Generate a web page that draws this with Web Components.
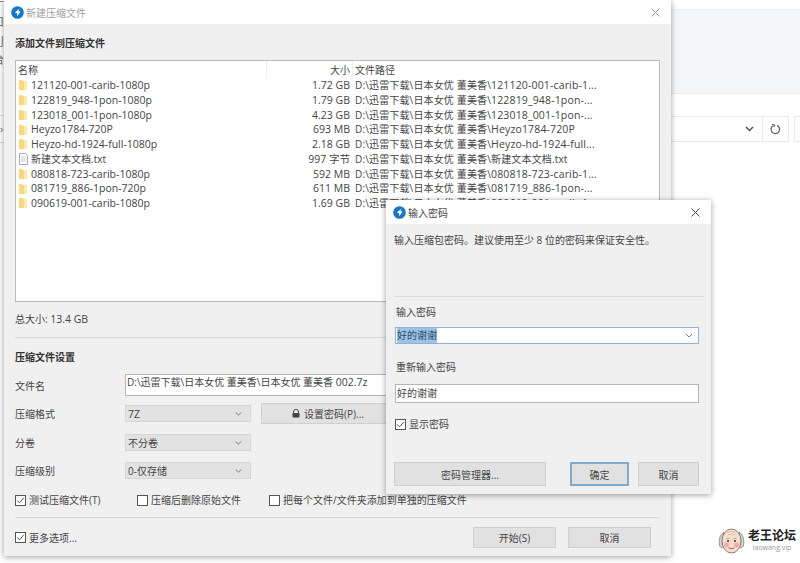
<!DOCTYPE html>
<html lang="zh">
<head>
<meta charset="utf-8">
<title>新建压缩文件</title>
<style>
  html, body { margin: 0; height: 100%; background: #fff; }
  body { font: 10px "Open Sans", "Noto Sans CJK SC", sans-serif; color: #333; overflow: hidden; }
</style>
</head>
<body>
<zip-desktop></zip-desktop>

<script>
const APP_ICON = `<svg width="13" height="13" viewBox="0 0 14 14"><circle cx="7" cy="7" r="6.8" fill="#1477c9"/><path d="M9.300 2.800 4 7.200l2.500.4.200 3.400 3.600-5-2.400-.3z" fill="#fff"/></svg>`;
const PATH_BASE = 'D:\\迅雷下载\\日本女优 董美香\\';

class WinButton extends HTMLElement {
  constructor() {
    super();
    this.attachShadow({ mode: 'open' });
    this.shadowRoot.innerHTML = `
      <style>
        :host {
          display: flex;
          align-items: center;
          justify-content: center;
          gap: 4px;
          box-sizing: border-box;
          height: 21px;
          background: #e1e1e1;
          border: 1px solid #d0d0d0;
          color: #444;
          white-space: nowrap;
        }
        :host([primary]) { border: 2px solid #7cabd2; }
      </style>
      <slot></slot>
    `;
  }
}
customElements.define('win-button', WinButton);

class WinInput extends HTMLElement {
  constructor() {
    super();
    this.attachShadow({ mode: 'open' });
    this.shadowRoot.innerHTML = `
      <style>
        :host {
          display: flex;
          align-items: center;
          box-sizing: border-box;
          height: 19px;
          padding: 0 1px;
          background: #fff;
          border: 1px solid #b5b5b5;
          color: #444;
          white-space: nowrap;
        }
        :host([focused]) { border-color: #8db3d6; }
        :host([focused]) span { background: #9cc3e8; color: #2d4a63; }
        :host([top]) { align-items: flex-start; }
        span { line-height: 15px; }
        svg { margin-left: auto; margin-right: 4px; }
      </style>
      <span><slot></slot></span>
      ${this.hasAttribute('arrow') ? '<svg width="8" height="5" viewBox="0 0 8 5"><path d="M1 1l3 3 3-3" fill="none" stroke="#777"/></svg>' : ''}
    `;
  }
}
customElements.define('win-input', WinInput);

class WinSelect extends HTMLElement {
  constructor() {
    super();
    this.attachShadow({ mode: 'open' });
    this.shadowRoot.innerHTML = `
      <style>
        :host {
          display: flex;
          align-items: center;
          box-sizing: border-box;
          width: 126px;
          height: 17px;
          padding: 0 2px;
          background: #e2e2e2;
          border: 1px solid #d6d6d6;
          color: #444;
        }
        svg { margin-left: auto; margin-right: 6px; }
      </style>
      <slot></slot>
      <svg width="7" height="4" viewBox="0 0 7 4"><path d="M.7.5l2.800 2.600L6.300.5" fill="none" stroke="#777"/></svg>
    `;
  }
}
customElements.define('win-select', WinSelect);

class WinCheck extends HTMLElement {
  constructor() {
    super();
    this.attachShadow({ mode: 'open' });
    this.shadowRoot.innerHTML = `
      <style>
        :host {
          display: inline-flex;
          align-items: center;
          gap: 3px;
          line-height: 16px;
          color: #444;
          white-space: nowrap;
        }
        .box {
          box-sizing: border-box;
          width: 11px;
          height: 11px;
          border: 1px solid #555;
          background: #fff;
          display: flex;
        }
      </style>
      <span class="box">${this.hasAttribute('checked') ? '<svg width="9" height="9" viewBox="0 0 9 9"><path d="M1.200 4.400l2.300 2.400 4.400-5" fill="none" stroke="#555"/></svg>' : ''}</span>
      <slot></slot>
    `;
  }
}
customElements.define('win-check', WinCheck);

class WinWindow extends HTMLElement {
  constructor() {
    super();
    this.attachShadow({ mode: 'open' });
    const faded = this.hasAttribute('inactive');
    this.shadowRoot.innerHTML = `
      <style>
        :host {
          display: flex;
          flex-direction: column;
          position: absolute;
          box-sizing: border-box;
          background: #f0f0f0;
          box-shadow: 0 1px 6px rgba(0,0,0,0.38);
        }
        header {
          flex: none;
          display: flex;
          align-items: center;
          gap: 2px;
          height: 24px;
          padding: 0 7px;
          background: #fff;
          color: ${faded ? '#a2a2a2' : '#444'};
        }
        svg.close { margin-left: auto; margin-right: 4px; }
        main { flex: 1; min-height: 0; display: flex; flex-direction: column; }
      </style>
      <header>
        ${APP_ICON}
        <span>${this.getAttribute('caption')}</span>
        <svg class="close" width="9" height="9" viewBox="0 0 9 9"><path d="M.5.5l8 8M8.500.5l-8 8" stroke="${faded ? '#999' : '#444'}" fill="none"/></svg>
      </header>
      <main><slot></slot></main>
    `;
  }
}
customElements.define('win-window', WinWindow);

class FileList extends HTMLElement {
  constructor() {
    super();
    this.attachShadow({ mode: 'open' });
    const files = [
      ['121120-001-carib-1080p', '1.72 GB', '121120-001-carib-1...'],
      ['122819_948-1pon-1080p', '1.79 GB', '122819_948-1pon-...'],
      ['123018_001-1pon-1080p', '4.23 GB', '123018_001-1pon-...'],
      ['Heyzo1784-720P', '693 MB', 'Heyzo1784-720P'],
      ['Heyzo-hd-1924-full-1080p', '2.18 GB', 'Heyzo-hd-1924-full...'],
      ['新建文本文档.txt', '997 字节', '新建文本文档.txt', true],
      ['080818-723-carib-1080p', '592 MB', '080818-723-carib-1...'],
      ['081719_886-1pon-720p', '611 MB', '081719_886-1pon-...'],
      ['090619-001-carib-1080p', '1.69 GB', '090619-001-carib-1...'],
    ];
    const folder = `<svg width="8" height="10" viewBox="0 0 8 10"><path d="M0 0h3l1 1h4v9H0z" fill="#f8d877"/><path d="M5 1h3v9H5z" fill="#fce9ae"/></svg>`;
    const doc = `<svg width="9" height="12" viewBox="0 0 9 12"><path d="M.5.500h6l2 2v9h-8z" fill="#fbfbfb" stroke="#a9a9a9"/><path d="M2 4h5M2 6h5M2 8h5" stroke="#d0d0d0"/></svg>`;
    this.shadowRoot.innerHTML = `
      <style>
        :host {
          display: block;
          box-sizing: border-box;
          height: 242px;
          background: #fff;
          border: 1px solid #b9b9b9;
          color: #444;
        }
        .row {
          display: grid;
          grid-template-columns: 13px 236px 83px 1fr;
          height: 14.75px;
          line-height: 14.75px;
          padding-left: 2px;
          white-space: nowrap;
        }
        .head { height: 17px; line-height: 18px; }
        .head .name { grid-column: 1 / 3; border-right: 1px solid #eee; }
        .head .path { background: linear-gradient(#eee, #eee) 2px 0 / 1px 100% no-repeat; }
        .icon { display: flex; align-items: center; padding-left: 1px; }
        .size { text-align: right; }
        .path { padding-left: 5px; overflow: hidden; }
        .row:not(.head) .path { letter-spacing: .15px; }
        .lat { font-size: 10.5px; }
      </style>
      <div class="row head"><span class="name">名称</span><span class="size">大小</span><span class="path">文件路径</span></div>
      ${files.map(f => `
        <div class="row">
          <span class="icon">${f[3] ? doc : folder}</span>
          <span class="${f[3] ? '' : 'lat'}">${f[0]}</span>
          <span class="size lat">${f[1]}</span>
          <span class="path">${PATH_BASE}<span class="${f[3] ? '' : 'lat'}">${f[2]}</span></span>
        </div>`).join('')}
    `;
  }
}
customElements.define('file-list', FileList);

class CompressPanel extends HTMLElement {
  constructor() {
    super();
    this.attachShadow({ mode: 'open' });
    this.shadowRoot.innerHTML = `
      <style>
        :host {
          display: flex;
          flex-direction: column;
          flex: 1;
          min-height: 0;
          padding: 11px 11px 0 11px;
          color: #444;
        }
        h2 { margin: 0; font-size: 10px; font-weight: 700; color: #333; line-height: 16px; }
        file-list { margin-top: 9px; }
        .total { margin-top: 9px; line-height: 16px; }
        hr { border: 0; border-top: 1px solid #d9d9d9; margin: 0; }
        .total + hr { margin-top: 10px; }
        .settings { margin-top: 11px; }
        .line {
          display: grid;
          grid-template-columns: 110px 126px 10px 134px;
          align-items: center;
        }
        .name-line { margin-top: 9px; height: 22px; }
        .name-line win-input { grid-column: 2 / 5; width: 300px; height: 22px; }
        .format-line { margin-top: 7px; height: 21px; }
        .split-line { margin-top: 10px; height: 17px; }
        .level-line { margin-top: 11px; height: 17px; }
        .checks { display: flex; margin-top: 13px; }
        .checks win-check:nth-child(1) { width: 122px; }
        .checks win-check:nth-child(2) { width: 132px; }
        .checks + hr { margin-top: 9px; }
        footer { display: flex; align-items: center; margin-top: 9px; padding-right: 9px; }
        footer win-button { width: 83px; }
        footer win-button:nth-of-type(1) { margin-left: auto; margin-right: 12px; }
        .lat { font-size: 10.5px; }
      </style>
      <h2>添加文件到压缩文件</h2>
      <file-list></file-list>
      <div class="total">总大小: <span class="lat">13.4 GB</span></div>
      <hr>
      <h2 class="settings">压缩文件设置</h2>
      <div class="line name-line">
        <span>文件名</span>
        <win-input top>D:\\迅雷下载\\日本女优 董美香\\日本女优 董美香 <span class="lat">002.7z</span></win-input>
      </div>
      <div class="line format-line">
        <span>压缩格式</span>
        <win-select><span class="lat">7Z</span></win-select>
        <span></span>
        <win-button>
          <svg width="8" height="9" viewBox="0 0 8 9"><path d="M1.500 4.500V3a2.500 2.500 0 0 1 5 0v1.500" fill="#eee" stroke="#444"/><rect x=".5" y="4" width="7" height="4.500" rx=".8" fill="#444"/></svg>
          设置密码(P)...
        </win-button>
      </div>
      <div class="line split-line">
        <span>分卷</span>
        <win-select>不分卷</win-select>
      </div>
      <div class="line level-line">
        <span>压缩级别</span>
        <win-select>0-仅存储</win-select>
      </div>
      <div class="checks">
        <win-check checked>测试压缩文件(T)</win-check>
        <win-check>压缩后删除原始文件</win-check>
        <win-check>把每个文件/文件夹添加到单独的压缩文件</win-check>
      </div>
      <hr>
      <footer>
        <win-check checked>更多选项...</win-check>
        <win-button>开始(S)</win-button>
        <win-button>取消</win-button>
      </footer>
    `;
  }
}
customElements.define('compress-panel', CompressPanel);

class PasswordPanel extends HTMLElement {
  constructor() {
    super();
    this.attachShadow({ mode: 'open' });
    this.shadowRoot.innerHTML = `
      <style>
        :host {
          display: flex;
          flex-direction: column;
          flex: 1;
          padding: 8px 12px 0 8px;
          color: #444;
        }
        p { margin: 0; line-height: 16px; }
        hr { border: 0; border-top: 1px solid #d9d9d9; margin: 48px -5px 0 0; }
        label { display: block; margin: 0 0 0 2px; line-height: 16px; }
        .first { margin-top: 7px; }
        win-input { margin: 9px 0 0 1px; }
        win-input[focused] { margin-top: 7px; height: 17px; }
        .second { margin-top: 15px; }
        win-check { margin: 13px 0 0 1px; }
        footer { display: flex; margin-top: 30px; }
        footer win-button { height: 24px; }
        footer win-button:nth-child(1) { width: 152px; margin-right: 24px; }
        footer win-button:nth-child(2) { width: 59px; margin-right: 9px; }
        footer win-button:nth-child(3) { width: 61px; }
      </style>
      <p>输入压缩包密码。建议使用至少 8 位的密码来保证安全性。</p>
      <hr>
      <label class="first">输入密码</label>
      <win-input focused arrow>好的谢谢</win-input>
      <label class="second">重新输入密码</label>
      <win-input>好的谢谢</win-input>
      <win-check checked>显示密码</win-check>
      <footer>
        <win-button>密码管理器...</win-button>
        <win-button primary>确定</win-button>
        <win-button>取消</win-button>
      </footer>
    `;
  }
}
customElements.define('password-panel', PasswordPanel);

class ForumMark extends HTMLElement {
  constructor() {
    super();
    this.attachShadow({ mode: 'open' });
    this.shadowRoot.innerHTML = `
      <style>
        :host {
          position: absolute;
          left: 718px;
          top: 527px;
          display: flex;
          align-items: center;
          gap: 3px;
        }
        .words { display: flex; flex-direction: column; align-items: center; margin-top: -1px; }
        b { font-size: 12px; line-height: 15px; color: #222; }
        small { font-size: 7px; line-height: 9px; color: #999; }
      </style>
      <svg width="27" height="27" viewBox="0 0 27 27">
        <path d="M6 5C2 7 .5 13 1.500 18c.6 3 3 3.500 4.500 2zM21 5c4 2 5.500 8 4.500 13-.6 3-3 3.500-4.500 2z" fill="#d5d2cf" stroke="#777" stroke-width=".7"/>
        <ellipse cx="13.500" cy="14" rx="9.500" ry="12" fill="#f8ddcb" stroke="#666" stroke-width=".8"/>
        <path d="M9 5.500c3-1.500 6-1.500 9 0M10 8c2-1 5-1 7 0" fill="none" stroke="#d3b5a5" stroke-width=".8"/>
        <circle cx="8.500" cy="18" r="2.400" fill="#f2a8a0"/>
        <circle cx="18.500" cy="18" r="2.400" fill="#f2a8a0"/>
        <circle cx="10" cy="14" r="1" fill="#333"/>
        <circle cx="17" cy="14" r="1" fill="#333"/>
        <path d="M8.500 11.500h3M15.500 11.500h3" stroke="#aaa" stroke-width="1"/>
        <path d="M10.500 20.500c1.500 1.500 4.500 1.500 6 0" fill="none" stroke="#a33" stroke-width=".8"/>
      </svg>
      <span class="words"><b>老王论坛</b><small>laowang.vip</small></span>
    `;
  }
}
customElements.define('forum-mark', ForumMark);

class ZipDesktop extends HTMLElement {
  constructor() {
    super();
    this.attachShadow({ mode: 'open' });
    this.shadowRoot.innerHTML = `
      <style>
        :host { display: block; position: relative; width: 800px; height: 563px; overflow: hidden; background: #fff; }
        .back { position: absolute; inset: 0; }
        .banner {
          position: absolute; left: 671px; right: 0; top: 9px; height: 83px;
          background: #f5f6f8; border-top: 1px solid #eee; border-bottom: 1px solid #eee;
        }
        .bar {
          position: absolute; left: 671px; right: 0; top: 116px; height: 26px;
          display: flex; align-items: stretch;
        }
        .combo {
          width: 92px; border: 1px solid #eaeaea; border-left: 0;
          display: flex; align-items: center; justify-content: flex-end; padding-right: 8px; box-sizing: border-box;
        }
        .reload {
          width: 26px; box-sizing: border-box; border: 1px solid #eaeaea; border-left: 0;
          display: flex; align-items: center; justify-content: center;
        }
        .rest { margin-left: 5px; flex: 1; border: 1px solid #eaeaea; border-right: 0; }
        .edge { position: absolute; left: 0; width: 4px; overflow: hidden; color: #666; font-size: 11px; line-height: 14px; white-space: nowrap; text-indent: -7px; opacity: .99; }
        .rule { position: absolute; left: 0; width: 4px; border-top: 1px solid #ddd; }
        #main { left: 4px; top: 0; width: 667px; height: 556px; }
        #pass { left: 386px; top: 200px; width: 325px; height: 294px; }
      </style>
      <div class="back">
        <div class="banner"></div>
        <div class="bar">
          <div class="combo"><svg width="9" height="6" viewBox="0 0 9 6"><path d="M1 1l3.500 3.500L8 1" fill="none" stroke="#555" stroke-width="1.500"/></svg></div>
          <div class="reload"><svg width="11" height="11" viewBox="0 0 11 11"><path d="M3.500 1.500a4.300 4.300 0 1 0 3.500-.1" fill="none" stroke="#666" stroke-width="1.300"/><path d="M2 .5l2.600.3-.4 2.400" fill="none" stroke="#666"/></svg></div>
          <div class="rest"></div>
        </div>
        <div class="edge" style="top:-7px">年</div>
        <div class="edge" style="top:15px">口</div>
        <div class="edge" style="top:35px">刂</div>
        <div class="edge" style="top:53px">台</div>
        <div class="rule" style="top:115px"></div>
        <div class="edge" style="top:122px;text-indent:0">›</div>
        <div class="rule" style="top:142px"></div>
      </div>
      <win-window id="main" caption="新建压缩文件" inactive><compress-panel></compress-panel></win-window>
      <win-window id="pass" caption="输入密码"><password-panel></password-panel></win-window>
      <forum-mark></forum-mark>
    `;
  }
}
customElements.define('zip-desktop', ZipDesktop);
</script>
</body>
</html>
